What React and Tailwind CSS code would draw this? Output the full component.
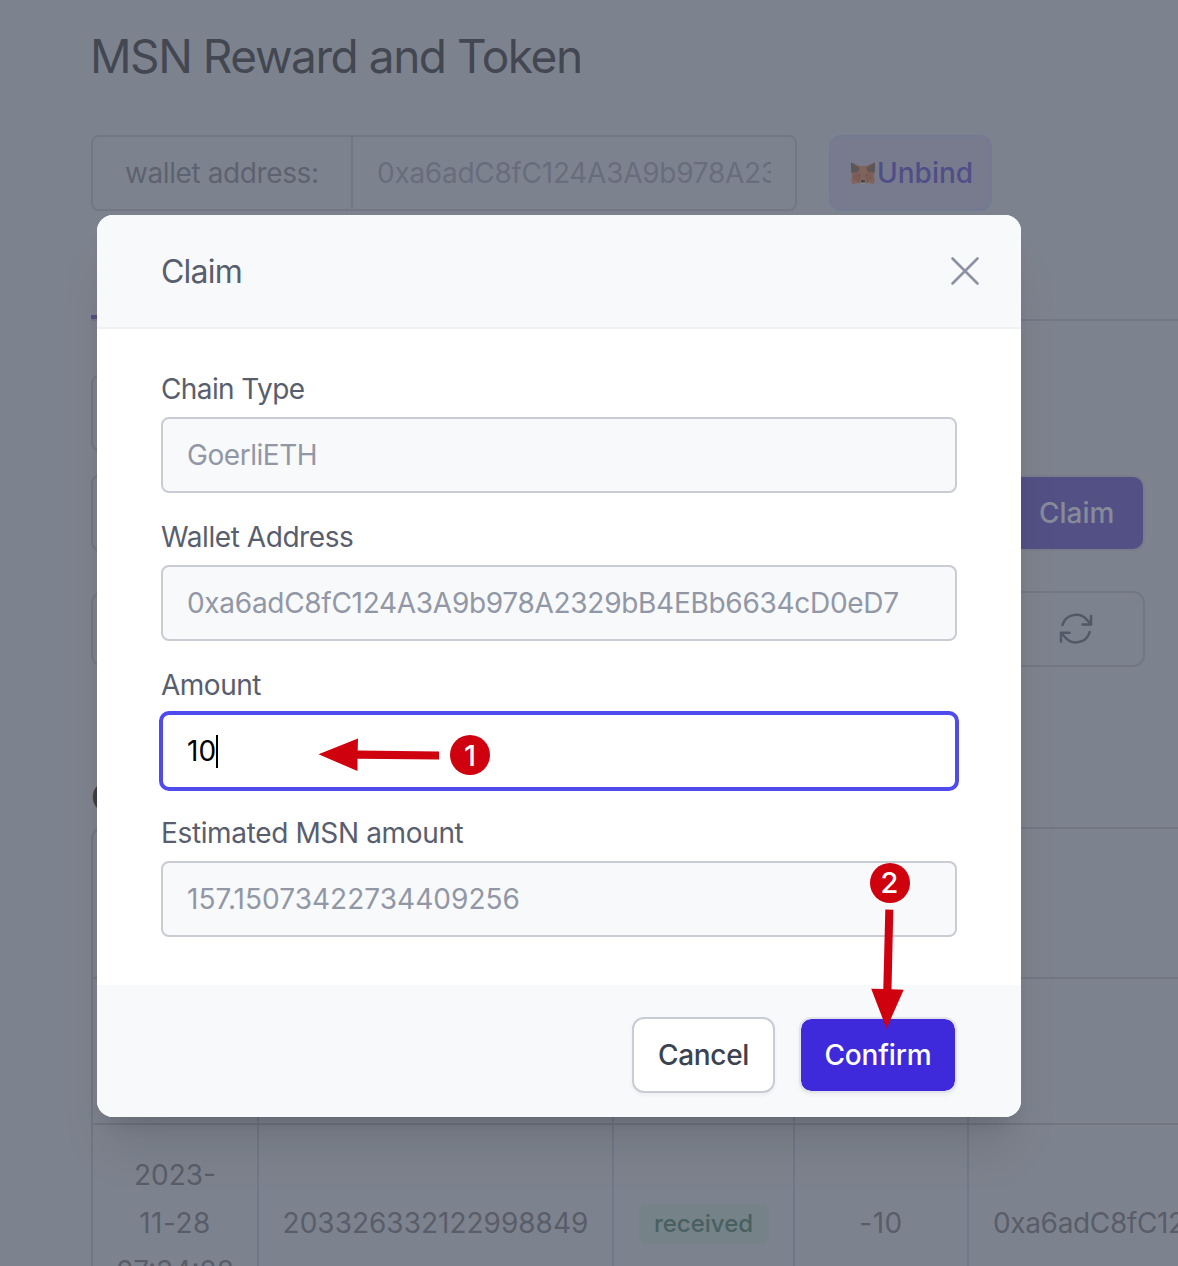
import React from "react";

const WALLET = "0xa6adC8fC124A3A9b978A2329bB4EBb6634cD0eD7";

function FoxIcon() {
  return (
    <svg width="24" height="24" viewBox="0 0 24 24" className="shrink-0">
      <path d="M0 1.500L8.500 5H15.500L24 1.500V12L22.500 14.500L24 19L22.500 23L16 21.500L14 23.500H10L8 21.500L1.500 23L0 19L1.500 14.500L0 12Z" fill="#80635b" />
      <path d="M0 1.500L9 6L7.500 10.500L1.500 12L0 9Z" fill="#5d5659" />
      <path d="M24 1.500L15 6L16.500 10.500L22.500 12L24 9Z" fill="#5d5659" />
      <path d="M0 1.500L9.500 7.500L8 5.500Z M24 1.500L14.500 7.500L16 5.500Z" fill="#855e50" />
      <path d="M1.500 14.500L7.500 11L10 21L8 21.500L1.500 17Z M22.500 14.500L16.500 11L14 21L16 21.500L22.500 17Z" fill="#7c5c54" />
      <path d="M6 14.500L9.500 13.500L10 15.500Z M18 14.500L14.500 13.500L14 15.500Z" fill="#6a5659" />
      <path d="M9 21L10 19H14L15 21L14 23.500H10Z" fill="#8b8583" />
      <path d="M9.800 20L10.500 19H13.500L14.200 20L14 21.500H10Z" fill="#414653" />
    </svg>
  );
}

function RefreshIcon() {
  return (
    <svg width="34" height="32" viewBox="0 0 34 32" fill="none" stroke="#525866" strokeWidth="2.500" strokeLinecap="round" strokeLinejoin="round">
      <path d="M3.500 12A14.200 14.200 0 0 1 28.200 7.200L32 11.200" />
      <path d="M32 3V11.500H23.500" />
      <path d="M30.700 19A14.200 14.200 0 0 1 5.900 24L2 20" />
      <path d="M2 28.500V19.800H10.500" />
    </svg>
  );
}

function Page() {
  return (
    <div className="flex h-full w-[1800px] flex-col bg-[#7d838e] pl-[91px] *:shrink-0">
      <h1 className="mt-[28px] -ml-px h-[57px] text-[46px] leading-[56px] tracking-[-1.45px] text-[#434752]">MSN Reward and Token</h1>
      <div className="mt-[50px] flex h-19 gap-8 text-[28px] *:shrink-0">
        <div className="flex w-[706px] rounded-lg border-2 border-[#727784]">
          <div className="flex w-[260px] shrink-0 items-center border-r-2 border-[#727784] pl-[32px] tracking-[-0.4px] text-[#5d6270]">wallet address:</div>
          <div className="flex min-w-0 flex-1 items-center px-6">
            <span className="overflow-hidden whitespace-nowrap tracking-[-0.27px] text-[#686d7d]">{WALLET}</span>
          </div>
        </div>
        <div className="flex w-[163px] items-center rounded-xl border-2 border-[#737a93] bg-[#777b8d] pl-[20px] font-medium text-[#504e87]">
          <FoxIcon />
          <span className="pl-[2px]">Unbind</span>
        </div>
      </div>
      <div className="mt-[104px] flex h-1.5 border-b-2 border-[#737784]">
        <div className="h-1 w-40 bg-[#525086]" />
      </div>
      <div className="mt-[54px] h-19 w-[706px] rounded-lg border-2 border-[#727682]" />
      <div className="mt-6 flex h-19 w-[1054px] items-center justify-between">
        <div className="h-19 w-[706px] rounded-lg border-2 border-[#727682]" />
        <div className="mr-0.5 h-[72px] w-[154px] rounded-[10px] bg-[#535086] pl-[50px] text-[28px] leading-[72px] font-medium text-[#868b99] shadow-[0_0_0_2px_#797d89]">Claim</div>
      </div>
      <div className="mt-10 flex h-19 w-[1054px] items-center justify-end rounded-xl border-2 border-[#737783] pr-[50px]">
        <RefreshIcon />
      </div>
      <h2 className="mt-[107px] h-[48px] text-[38px] leading-[46px] font-semibold text-[#3a3e49]">Claim records</h2>
      <div className="mt-[5px] flex flex-col rounded-tl-xl border-t-2 border-l-2 border-[#727683] text-[28px] text-[#595d69] *:shrink-0">
        <div className="h-[148px]" />
        <div className="flex h-[146px] border-t-2 border-[#727683] *:shrink-0">
          <div className="w-[166px] border-r-2 border-[#727789]" />
          <div className="w-[355px] border-r-2 border-[#727789]" />
          <div className="w-[181px] border-r-2 border-[#727789]" />
          <div className="w-[174px] border-r-2 border-[#727789]" />
        </div>
        <div className="flex h-[198px] items-center border-t-2 border-[#70757f] leading-[48px] *:shrink-0">
          <div className="flex h-full w-[166px] flex-col items-center justify-center border-r-2 border-[#727789]">
            <span>2023-</span>
            <span className="tracking-[0.5px]">11-28</span>
            <span>07:34:28</span>
          </div>
          <div className="flex h-full w-[355px] items-center justify-center border-r-2 border-[#727789]">203326332122998849</div>
          <div className="flex h-full w-[181px] items-center justify-center border-r-2 border-[#727789]">
            <span className="mt-px h-10 w-[130px] rounded-lg bg-[#758287] text-center text-[24px] leading-10 font-medium text-[#486060]">received</span>
          </div>
          <div className="flex h-full w-[174px] items-center justify-center border-r-2 border-[#727789] tracking-[0.5px]">-10</div>
          <div className="pl-6 whitespace-nowrap tracking-[-0.35px]">{WALLET}</div>
        </div>
      </div>
    </div>
  );
}

function Field({ label, value, tracking, valueTracking, active }) {
  return (
    <div>
      <div className={`h-10 text-[28px] leading-10 text-[#585e6e] ${tracking}`}>{label}</div>
      {active ? (
        <div className="-mx-0.5 mt-1.5 -mb-0.5 flex h-20 items-center rounded-[10px] border-4 border-[#4f4bed] bg-white pl-6 text-[28px] text-black">
          <span>{value}</span>
          <span className="h-[33px] w-0.5 bg-black" />
        </div>
      ) : (
        <div className={`mt-2 flex h-19 items-center rounded-lg border-2 border-[#c9cbd5] bg-[#f8f9fb] pl-6 text-[28px] text-[#9197a5] ${valueTracking}`}>{value}</div>
      )}
    </div>
  );
}

function ClaimDialog() {
  return (
    <div className="absolute top-[215px] left-[97px] h-[902px] w-[924px] rounded-2xl bg-white shadow-[0_40px_50px_-10px_rgba(0,0,0,0.1),0_16px_20px_-12px_rgba(0,0,0,0.12)]">
      <div className="flex h-[114px] items-center justify-between rounded-t-2xl border-b-2 border-[#eff1f5] bg-[#f8f9fb] pr-[41px] pl-16">
        <span className="pt-px text-[32px] tracking-[-0.8px] text-[#585e6e]">Claim</span>
        <svg width="30" height="30" viewBox="0 0 30 30" fill="none" stroke="#8b92a1" strokeWidth="2.600" strokeLinecap="round">
          <path d="M2.500 2.500L27.500 27.500M27.500 2.500L2.500 27.500" />
        </svg>
      </div>
      <div className="flex h-[656px] flex-col gap-6 px-16 pt-10">
        <Field label="Chain Type" value="GoerliETH" tracking="tracking-[-0.6px]" valueTracking="tracking-[-0.45px]" />
        <Field label="Wallet Address" value={WALLET} tracking="tracking-[-0.43px]" valueTracking="tracking-[-0.29px]" />
        <Field label="Amount" value="10" active tracking="tracking-[-0.5px]" />
        <Field label="Estimated MSN amount" value="157.15073422734409256" tracking="tracking-[-0.36px]" valueTracking="tracking-[0.04px]" />
      </div>
      <div className="flex h-[132px] justify-end gap-6 rounded-b-2xl bg-[#f8f9fb] px-16 pt-8 text-[28px] font-medium">
        <button className="h-19 w-[143px] rounded-xl border-2 border-[#c9cbd5] bg-white tracking-[-0.3px] text-[#3b4250] shadow-[0_2px_4px_rgba(0,0,0,0.05)]">Cancel</button>
        <button className="h-19 w-[158px] rounded-xl border-2 border-[#e3e5ea] bg-[#3e2adb] bg-clip-padding tracking-[-0.15px] text-white shadow-[0_2px_4px_rgba(0,0,0,0.05)]">Confirm</button>
      </div>
    </div>
  );
}

function Step({ n, className }) {
  return <div className={`absolute flex size-10 items-center justify-center rounded-full bg-[#d0010f] text-[29px] font-medium text-white ${className}`}>{n}</div>;
}

function Annotations() {
  return (
    <>
      <svg className="absolute top-[735px] left-[315px]" width="128" height="40" viewBox="315 735 128 40" fill="#d0010f">
        <path d="M318.500 754.300L358 738.500L357.700 750.500L439 751.500V759.600L357.500 758.800V771Z" />
      </svg>
      <Step n="1" className="top-[735px] left-[450px] pt-0.5" />
      <svg className="absolute top-[905px] left-[865px]" width="44" height="126" viewBox="865 905 44 126" fill="#d0010f">
        <path d="M885.300 909.500L893.300 909.800L891.500 989.300L903.700 989.700L886.500 1028.500L871.200 988.700L883.300 989Z" />
      </svg>
      <Step n="2" className="top-[863px] left-[869.5px]" />
    </>
  );
}

export default function App() {
  return (
    <div className="relative h-[1266px] w-[1178px] overflow-hidden font-['Inter',sans-serif]">
      <Page />
      <ClaimDialog />
      <Annotations />
    </div>
  );
}
